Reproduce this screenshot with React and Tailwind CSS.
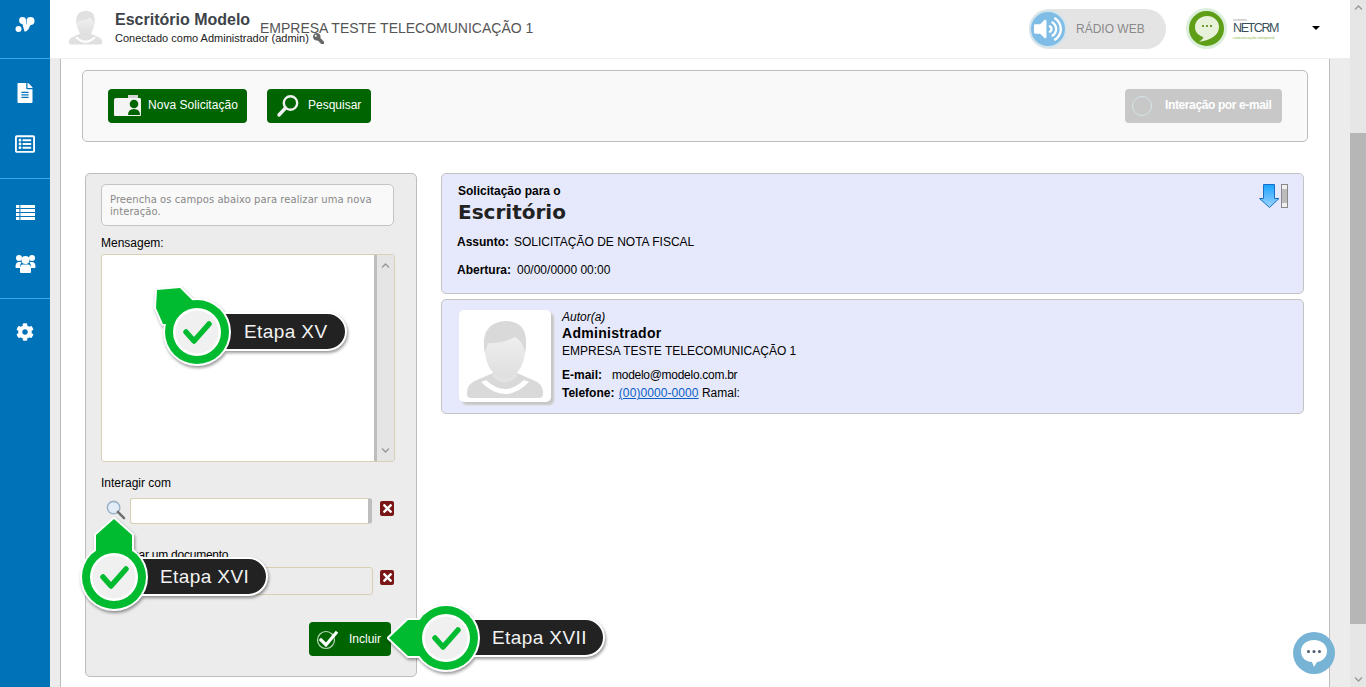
import React from "react";
import { FaFileAlt, FaRegListAlt, FaCog, FaVolumeUp, FaKey, FaTimes, FaChevronUp, FaChevronDown } from "react-icons/fa";

const sans = "font-['Liberation_Sans',Arial,sans-serif]";

function Logo() {
  return (
    <svg width="20" height="18" viewBox="0 0 20 18" fill="#fff">
      <circle cx="3.5" cy="13" r="3" />
      <circle cx="15.5" cy="5" r="4" />
      <circle cx="7.5" cy="4.5" r="3.4" />
      <path d="M6 3 L10 2 L13 13 Q12 16 9.5 15.5 Z" />
      <path d="M10 12 L13 5 L16 8 L13 14 Z" />
    </svg>
  );
}

function RowsIcon() {
  return (
    <svg width="19" height="15" viewBox="0 0 19 15" fill="#fff">
      <rect x="0" y="0" width="3.4" height="3" />
      <rect x="4.4" y="0" width="14.6" height="3" />
      <rect x="0" y="4" width="3.4" height="3" />
      <rect x="4.4" y="4" width="14.6" height="3" />
      <rect x="0" y="8" width="3.4" height="3" />
      <rect x="4.4" y="8" width="14.6" height="3" />
      <rect x="0" y="12" width="3.4" height="3" />
      <rect x="4.4" y="12" width="14.6" height="3" />
    </svg>
  );
}

function UsersIcon() {
  return (
    <svg width="21" height="20" viewBox="0 0 21 20" fill="#fff">
      <circle cx="4" cy="4" r="3" />
      <circle cx="17" cy="4" r="3" />
      <circle cx="10.5" cy="6" r="4" />
      <path d="M0.5 13 Q0.5 8 4 8 L6.5 8 Q5 10 5 14 L1 14 Q0.5 14 0.5 13 Z" />
      <path d="M20.5 13 Q20.5 8 17 8 L14.5 8 Q16 10 16 14 L20 14 Q20.5 14 20.5 13 Z" />
      <path d="M6 19 Q5 19 5 18 L5 14 Q5 10.5 8 10.5 L13 10.5 Q16 10.5 16 14 L16 18 Q16 19 15 19 Z" />
    </svg>
  );
}

function Avatar({ w, h, tone = "#d9d9d9" }) {
  return (
    <svg width={w} height={h} viewBox="0 0 80 80">
      <defs>
        <linearGradient id="avf" x1="0" y1="0" x2="0" y2="1">
          <stop offset="0" stopColor="#f5f5f5" />
          <stop offset="1" stopColor="#dedede" />
        </linearGradient>
      </defs>
      <path d="M2 76 Q1 66 12 62 L28 55 L52 55 L68 62 Q79 66 78 76 Q78 80 74 80 L6 80 Q2 80 2 76 Z" fill={tone} />
      <path d="M21 62 Q40 80 59 62 L64 64 Q40 88 16 64 Z" fill="#fff" />
      <path d="M27 44 L53 44 L52 59 Q40 70 28 59 Z" fill="#e2e2e2" />
      <ellipse cx="40" cy="32" rx="20" ry="28" fill="url(#avf)" />
      <path d="M20 36 Q14 5 40 3 Q66 3 60 36 Q59 24 50 19 Q36 26 24 25 Q21 28 20 36 Z" fill={tone} />
    </svg>
  );
}

function GreenButton({ children, icon, className }) {
  return (
    <div className={`flex h-[34px] items-center rounded-[4px] bg-[#006400] pb-[2px] text-[12px] text-white ${className}`}>
      {icon}
      <span className="whitespace-nowrap">{children}</span>
    </div>
  );
}

function CardIcon() {
  return (
    <svg width="29" height="22" viewBox="0 0 29 22" className="ml-[5px] mr-[6px] mt-[2px] shrink-0">
      <path d="M15 0 H25 V3 H15 Z" fill="#d5d5d5" />
      <path d="M1 5 Q1 3 3 3 H27 Q28 3 28 5 V20 Q28 21 27 21 H2 Q1 21 1 20 Z" fill="#f4f4f4" />
      <circle cx="21" cy="9" r="4.3" fill="#006400" />
      <path d="M15 20 Q15 14 21 14 Q27 14 27 20 Z" fill="#006400" />
    </svg>
  );
}

function LensIcon() {
  return (
    <svg width="24" height="24" viewBox="0 0 24 24" className="ml-[9px] mr-[8px] mt-[2px] shrink-0">
      <circle cx="14.5" cy="9" r="6.7" fill="none" stroke="#f2f2f2" strokeWidth="2.4" />
      <path d="M9.5 14 L3 21" stroke="#f2f2f2" strokeWidth="3.4" strokeLinecap="round" />
    </svg>
  );
}

function Badge({ className, dir, width, label, textLeft }) {
  const pointers = {
    upLeft: "M0 21 L23 19 L36 32 L30 56 L6 55 L-1 39 Z",
    up: "M40 5 L58 21 L58 50 L22 50 L22 21 Z",
    left: "M-17 63 L2 45 L30 45 L30 81 L2 81 Z",
  };
  return (
    <div className={`absolute h-[100px] ${className}`} style={{ width }}>
      <svg width={width} height="100" viewBox={`-20 0 ${width} 100`} className="absolute left-0 top-0 overflow-visible">
        <g style={{ filter: "drop-shadow(1px 2px 1.5px rgba(0,0,0,.4))" }}>
          <path d={pointers[dir]} fill="#fff" stroke="#fff" strokeWidth="4" strokeLinejoin="round" />
          <rect x="40" y="44" width={width - 63} height="37" rx="18.5" fill="#222" stroke="#fff" strokeWidth="2" />
          <circle cx="40" cy="63" r="34" fill="#fff" />
        </g>
        <path d={pointers[dir]} fill="#00ba2f" />
        <circle cx="40" cy="63" r="32" fill="#00ba2f" />
        <circle cx="40" cy="63" r="24" fill="#fff" />
        <circle cx="40" cy="63" r="21.5" fill="#f0f0f0" />
        <path d="M29 63 L37 72 L52 55" fill="none" stroke="#00ba2f" strokeWidth="5.5" strokeLinecap="round" strokeLinejoin="round" />
      </svg>
      <span
        className={`absolute top-[51px] text-[19px] leading-[24px] tracking-[0.4px] whitespace-nowrap text-[#f2f2f2] ${sans}`}
        style={{ left: textLeft }}
      >
        {label}
      </span>
    </div>
  );
}

function DeleteBox({ className }) {
  return (
    <div className={`flex h-[15px] w-[14px] shrink-0 items-center justify-center rounded-[2px] bg-[#7b1616] ${className}`}>
      <FaTimes className="text-[13px] text-white" />
    </div>
  );
}

function NavItem({ children }) {
  return <div className="flex h-[51px] items-center justify-center text-white">{children}</div>;
}

export default function App() {
  return (
    <div className={`relative flex h-[687px] w-[1366px] overflow-hidden bg-white ${sans}`}>
      <aside className="flex w-[50px] shrink-0 flex-col bg-[#0072b8]">
        <div className="flex h-[59px] items-center justify-center border-b border-[#3aa5ea] pb-[18px] pt-[10px]">
          <Logo />
        </div>
        <div className="h-[120px] border-b border-[#3aa5ea] pt-[8px]">
          <NavItem><FaFileAlt className="text-[20px]" /></NavItem>
          <NavItem><FaRegListAlt className="text-[20px]" /></NavItem>
        </div>
        <div className="h-[120px] border-b border-[#3aa5ea] pt-[8px]">
          <NavItem><RowsIcon /></NavItem>
          <NavItem><UsersIcon /></NavItem>
        </div>
        <div className="pt-[7px]">
          <NavItem><FaCog className="text-[18px]" /></NavItem>
        </div>
      </aside>

      <div className="flex min-w-0 flex-1 flex-col">
        <header className="flex h-[59px] shrink-0 items-start border-b border-[#eeeeee] bg-white">
          <div className="ml-[18px] mt-[8px] shrink-0">
            <Avatar w={35} h={38} tone="#e0e0e0" />
          </div>
          <div className="ml-[12px] mt-[11px] w-[145px] shrink-0">
            <div className="whitespace-nowrap text-[16px] font-bold leading-[18px] text-[#3d4349]">Escritório Modelo</div>
            <div className="mt-[3px] flex items-center whitespace-nowrap text-[11px] leading-[13px] text-[#222]">
              Conectado como Administrador (admin)
              <FaKey className="ml-[4px] shrink-0 -scale-x-100 text-[11px] text-[#666]" />
            </div>
          </div>
          <div className="mt-[20px] whitespace-nowrap text-[14px] leading-[16px] text-[#555]">EMPRESA TESTE TELECOMUNICAÇÃO 1</div>
          <div className="flex-1" />
          <div className="mt-[9px] flex h-[40px] w-[137px] items-center rounded-full bg-[#e4e4e4]">
            <div className="flex h-[38px] w-[38px] items-center justify-center rounded-full border-[2px] border-[#d3e4ed] bg-[#7fbde6]">
              <FaVolumeUp className="text-[28px] text-white" />
            </div>
            <span className="ml-[9px] whitespace-nowrap text-[12px] text-[#8a8a8a]">RÁDIO WEB</span>
          </div>
          <div className="ml-[20px] mt-[8px] flex h-[41px] w-[41px] items-center justify-center rounded-full border-[3px] border-[#dcefdb] bg-[#5f9e17]">
            <svg width="26" height="28" viewBox="0 0 26 28">
              <path d="M13 1 C21 1 25 7 25 12 C25 20 17 25 5 27 C9 24 10 22 9 22 C4 20 1 17 1 12 C1 6 6 1 13 1 Z" fill="#e8f1da" />
              <circle cx="9" cy="11" r="1.1" fill="#4f8a10" />
              <circle cx="13" cy="11" r="1.1" fill="#4f8a10" />
              <circle cx="17" cy="11" r="1.1" fill="#4f8a10" />
            </svg>
          </div>
          <div className="ml-[6px] mt-[17px] w-[52px]">
            <div className="text-[4px] leading-[5px] text-[#999]">sistema</div>
            <div className="text-[12.5px] leading-[12px] tracking-[-1.4px] text-[#37505c]">NETCRM</div>
            <div className="mt-[1px] whitespace-nowrap text-[4px] leading-[5px] text-[#8fc04a]">comunicação netspeed</div>
          </div>
          <div className="ml-[27px] mr-[30px] mt-[26px] h-0 w-0 border-x-[4px] border-t-[4px] border-x-transparent border-t-black" />
        </header>

        <main className="flex min-h-0 flex-1 bg-[#ececec] px-[10px]">
          <div className="mr-[10px] flex-1 border-x border-[#bcbcbc] bg-white pl-[21px] pr-[21px] pt-[11px]">
            <section className="flex h-[72px] items-center rounded-[5px] border border-[#bdbdbd] bg-[#f9f9f9] pl-[25px] pr-[25px]">
              <GreenButton className="w-[139px] tracking-[0.03px]" icon={<CardIcon />}>Nova Solicitação</GreenButton>
              <GreenButton className="ml-[20px] w-[104px]" icon={<LensIcon />}>Pesquisar</GreenButton>
              <div className="flex-1" />
              <div className="flex h-[34px] w-[157px] items-center rounded-[4px] bg-[#c8c8c8] text-[12px] font-bold text-white">
                <div className="ml-[7px] h-[20px] w-[20px] rounded-full border-[1.5px] border-[#d5e5e8]" />
                <span className="ml-[13px] mb-[2px] whitespace-nowrap tracking-[-0.38px]">Interação por e-mail</span>
              </div>
            </section>

            <div className="mt-[31px] flex items-start pl-[3px] pr-[4px]">
              <section className="flex h-[504px] w-[332px] shrink-0 flex-col rounded-[5px] border border-[#bdbdbd] bg-[#ececec] pl-[15px] pt-[10px] text-[12px] text-black">
                <div className="h-[42px] w-[293px] rounded-[5px] border border-[#c4c4c4] bg-[#f9f9f9] pl-[8px] pt-[9px] font-['DejaVu_Sans',sans-serif] text-[10px] leading-[12px] tracking-[0.06px] text-[#888]">
                  Preencha os campos abaixo para realizar uma nova interação.
                </div>
                <div className="mt-[10px] leading-[14px]">Mensagem:</div>
                <div className="mt-[4px] flex h-[208px] w-[294px] rounded-[3px] border border-[#d9cfb4] bg-white">
                  <div className="flex-1" />
                  <div className="w-[3px] bg-[#bdbdbd]" />
                  <div className="flex w-[17px] flex-col items-center justify-between bg-[#e5e5e5] py-[6px] text-[#9a9a9a]">
                    <FaChevronUp className="text-[9px]" />
                    <FaChevronDown className="text-[9px]" />
                  </div>
                </div>
                <div className="mt-[14px] leading-[14px]">Interagir com</div>
                <div className="mt-[8px] flex h-[26px] items-start">
                  <div className="flex w-[29px] shrink-0 justify-center">
                    <svg width="21" height="21" viewBox="0 0 22 22" className="mt-[1px]">
                      <circle cx="9" cy="9" r="6.5" fill="#e3edf7" stroke="#9db2c6" strokeWidth="1.6" />
                      <path d="M13.5 13.5 L20 20" stroke="#6f6f6f" strokeWidth="2.6" strokeLinecap="round" />
                    </svg>
                  </div>
                  <div className="h-[26px] w-[242px] rounded-[3px] border border-[#d9cfb4] border-r-[4px] border-r-[#bdbdbd] bg-white" />
                  <DeleteBox className="ml-[8px] mt-[3px]" />
                </div>
                <div className="mt-[24px] leading-[14px] tracking-[-0.25px]">Adicionar um documento</div>
                <div className="mt-[5px] flex h-[28px] items-start">
                  <div className="h-[28px] w-[272px] rounded-[3px] border border-[#d9cfb4] bg-[#ececec]" />
                  <DeleteBox className="ml-[7px] mt-[3px]" />
                </div>
                <div className="mt-[27px] flex justify-end pr-[25px]">
                  <div className="flex h-[34px] w-[82px] items-center rounded-[4px] bg-[#006400] font-normal text-white">
                    <svg width="24" height="22" viewBox="0 0 24 22" className="ml-[7px] mr-[9px] shrink-0">
                      <circle cx="10" cy="12" r="8.5" fill="none" stroke="#bcd8bc" strokeWidth="1.2" />
                      <path d="M5 12 L10 17 L20 5" fill="none" stroke="#fff" strokeWidth="3.2" strokeLinecap="square" />
                    </svg>
                    <span>Incluir</span>
                  </div>
                </div>
              </section>

              <div className="ml-[24px] flex min-w-0 flex-1 flex-col gap-[5px]">
                <section className="relative h-[121px] rounded-[5px] border border-[#c4c4c4] bg-[#e6e9fb] pl-[16px] pt-[10px] text-[12px] text-black">
                  <div className="font-bold leading-[14px]">Solicitação para o</div>
                  <div className="mt-[2px] font-['DejaVu_Sans',sans-serif] text-[20px] font-bold leading-[25px] text-[#222]">Escritório</div>
                  <div className="-ml-[1px] mt-[10px] flex leading-[14px]">
                    <b>Assunto:</b><span className="ml-[5px]">SOLICITAÇÃO DE NOTA FISCAL</span>
                  </div>
                  <div className="-ml-[1px] mt-[14px] flex leading-[14px]">
                    <b>Abertura:</b><span className="ml-[6px]">00/00/0000 00:00</span>
                  </div>
                  <svg width="32" height="26" viewBox="0 0 32 26" className="absolute right-[12px] top-[10px]">
                    <defs>
                      <linearGradient id="arr" x1="0" y1="0" x2="0" y2="1">
                        <stop offset="0" stopColor="#1aa3ff" />
                        <stop offset="1" stopColor="#9ed4fb" />
                      </linearGradient>
                    </defs>
                    <path d="M4.5 0.5 H15.5 V14.5 H20 L10.5 23.5 L0.5 14.5 H4.5 Z" fill="url(#arr)" stroke="#1770c4" strokeWidth="1" />
                    <rect x="22.5" y="0.5" width="6" height="23" fill="#bcbcbc" stroke="#888" />
                    <rect x="23" y="1" width="5" height="4" fill="#efefef" />
                    <rect x="23" y="19" width="5" height="4" fill="#efefef" />
                  </svg>
                </section>
                <section className="flex h-[115px] rounded-[5px] border border-[#c4c4c4] bg-[#e6e9fb] pl-[17px] pt-[10px] text-[12px] text-black">
                  <div className="flex h-[92px] w-[92px] shrink-0 items-end justify-center rounded-[5px] bg-white pb-[4px] shadow-[3px_3px_2px_#c6c6c6]">
                    <Avatar w={82} h={80} />
                  </div>
                  <div className="ml-[11px]">
                    <div className="italic leading-[14px]">Autor(a)</div>
                    <div className="text-[14px] font-bold leading-[18px] tracking-[0.3px]">Administrador</div>
                    <div className="mt-[1px] leading-[17px]">EMPRESA TESTE TELECOMUNICAÇÃO 1</div>
                    <div className="mt-[8px] flex leading-[14px]">
                      <b>E-mail:</b><span className="ml-[10px] tracking-[-0.28px]">modelo@modelo.com.br</span>
                    </div>
                    <div className="mt-[4px] leading-[14px]">
                      <b>Telefone:</b> <span className="ml-[1px] tracking-[0.08px] text-[#0b5fc4] underline">(00)0000-0000</span> Ramal:
                    </div>
                  </div>
                </section>
              </div>
            </div>
          </div>
        </main>
      </div>

      <div className="flex w-[16px] shrink-0 flex-col bg-[#e6e6e6]">
        <div className="flex h-[133px] items-start justify-center pt-[3px] text-[#9a9a9a]">
          <FaChevronUp className="text-[9px]" />
        </div>
        <div className="h-[491px] bg-[#b6b6b6]" />
        <div className="flex flex-1 items-end justify-center pb-[3px] text-[#9a9a9a]">
          <FaChevronDown className="text-[9px]" />
        </div>
      </div>

      <Badge className="left-[137px] top-[269px]" dir="upLeft" width={212} label="Etapa XV" textLeft={107} />
      <Badge className="left-[54px] top-[514px]" dir="up" width={216} label="Etapa XVI" textLeft={106} />
      <Badge className="left-[386px] top-[575px]" dir="left" width={221} label="Etapa XVII" textLeft={106} />

      <div className="absolute left-[1293px] top-[632px] flex h-[42px] w-[42px] items-center justify-center rounded-full bg-[#76b3d5]">
        <svg width="28" height="30" viewBox="0 0 28 30">
          <path d="M14 2 C22 2 27 7 27 13 C27 20 21 24 17 24 L14 29 L12 24 C6 24 1 20 1 13 C1 7 6 2 14 2 Z" fill="#fff" />
          <circle cx="8.5" cy="13.5" r="1.5" fill="#4a5a70" />
          <circle cx="14" cy="13.5" r="1.5" fill="#4a5a70" />
          <circle cx="19.5" cy="13.5" r="1.5" fill="#4a5a70" />
        </svg>
      </div>
    </div>
  );
}
